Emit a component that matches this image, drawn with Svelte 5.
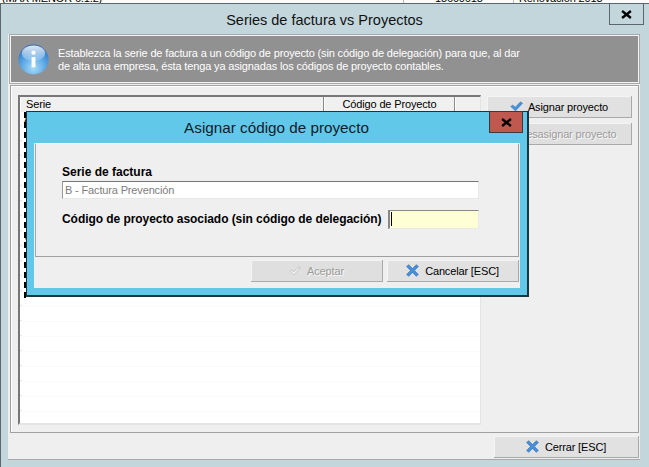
<script>
  const rows = Array.from({ length: 22 }, (_, i) => i);
  const marks = { 0: 'A', 8: 'V' };
</script>

{#snippet check()}
  <svg class="ic" viewBox="0 0 20 16" width="13" height="11" aria-hidden="true">
    <path d="M1 8 L4.5 5.5 L8 9 L16 0.8 L19.5 3 L8.5 15 Z" fill="#4a90d9" stroke="#2f6fb5" stroke-width="0.6"/>
  </svg>
{/snippet}

{#snippet hollowCheck()}
  <svg class="ic" viewBox="0 0 20 16" width="12" height="10" aria-hidden="true">
    <path d="M2 8 L5 6 L8 9.5 L16 1 L18.5 2.5 L8.5 14.5 Z" fill="#f2f2f2" stroke="#b4b4b4" stroke-width="1.1"/>
  </svg>
{/snippet}

{#snippet cross()}
  <svg class="ic" viewBox="0 0 20 20" width="13" height="13" aria-hidden="true">
    <path d="M4 1 L10 7 L16 1 L19 4 L13 10 L19 16 L16 19 L10 13 L4 19 L1 16 L7 10 L1 4 Z" fill="#4a90d9" stroke="#2f6fb5" stroke-width="1" stroke-linejoin="round"/>
  </svg>
{/snippet}

<div class="desktop">
  <div class="behind">
    <span class="b1">(MAX MENOR 6.1.2)</span>
    <i class="sep s1"></i>
    <span class="b2">18600618</span>
    <i class="sep s2"></i>
    <span class="b3">Renovación 2013</span>
  </div>

  <div class="window">
    <div class="titlebar">Series de factura vs Proyectos</div>
    <button class="close">
      <svg viewBox="0 0 10 8" width="11" height="9" aria-hidden="true"><path d="M1 0.8 L9 7.2 M9 0.8 L1 7.2" stroke="#000" stroke-width="2.1"/></svg>
    </button>

    <div class="content">
      <div class="info">
        <svg class="orb" viewBox="0 0 32 32" width="31" height="31" aria-hidden="true">
          <defs>
            <radialGradient id="o" cx="50%" cy="78%" r="75%">
              <stop offset="0" stop-color="#a9dcf8"/>
              <stop offset="0.55" stop-color="#5aa6e4"/>
              <stop offset="1" stop-color="#2a6fbe"/>
            </radialGradient>
            <linearGradient id="g" x1="0" y1="0" x2="0" y2="1">
              <stop offset="0" stop-color="#fff" stop-opacity="0.85"/>
              <stop offset="1" stop-color="#fff" stop-opacity="0.15"/>
            </linearGradient>
          </defs>
          <circle cx="16" cy="16" r="15.5" fill="url(#o)"/>
          <ellipse cx="16" cy="9.5" rx="12" ry="8" fill="url(#g)"/>
          <circle cx="16" cy="9" r="2.2" fill="#fff"/>
          <path d="M14 13.5 H18 V24 H14 Z" fill="#fff"/>
        </svg>
        <p>Establezca la serie de factura a un código de proyecto (sin código de delegación) para que, al dar<br/>de alta una empresa, ésta tenga ya asignadas los códigos de proyecto contables.</p>
      </div>

      <div class="group">
        <div class="list">
          <div class="head">
            <span class="h1">Serie</span>
            <span class="h2">Código de Proyecto</span>
            <span class="h3"></span>
          </div>
          <div class="rows">
            {#each rows as r}
              <div class="row">{marks[r] ?? ''}</div>
            {/each}
            <div class="focus"></div>
          </div>
        </div>
        <div class="actions">
          <button class="btn">{@render check()}<span class="lbl">Asignar proyecto</span></button>
          <button class="btn off">{@render hollowCheck()}<span class="lbl">Desasignar proyecto</span></button>
        </div>
      </div>

      <div class="footer">
        <button class="btn closebtn">{@render cross()}<span class="lbl">Cerrar [ESC]</span></button>
      </div>
    </div>
  </div>

  <div class="modal">
    <div class="mtitle">Asignar código de proyecto</div>
    <button class="mclose">
      <svg viewBox="0 0 10 8" width="11" height="9" aria-hidden="true"><path d="M1 0.8 L9 7.2 M9 0.8 L1 7.2" stroke="#000" stroke-width="2.1"/></svg>
    </button>
    <div class="mbody">
      <div class="mgroup">
        <div class="flabel first">Serie de factura</div>
        <div class="field wide">B - Factura Prevención</div>
        <div class="line">
          <span class="flabel">Código de proyecto asociado (sin código de delegación)</span>
          <div class="field code"><i class="caret"></i></div>
        </div>
      </div>
      <div class="mfoot">
        <button class="btn mbtn off">{@render hollowCheck()}<span class="lbl">Aceptar</span></button>
        <button class="btn mbtn">{@render cross()}<span class="lbl">Cancelar [ESC]</span></button>
      </div>
    </div>
  </div>
</div>

<style>
  :global(body) { margin: 0; }
  .desktop {
    position: relative;
    width: 649px;
    height: 467px;
    overflow: hidden;
    background: #fff;
    font-family: "Liberation Sans", Arial, sans-serif;
    font-size: 11px;
    letter-spacing: -0.15px;
    color: #000;
  }
  .behind { position: absolute; inset: 0 0 auto 0; height: 4px; overflow: hidden; background: #fbfbfb; line-height: 12px; }
  .behind span { position: absolute; top: -8px; }
  .sep { position: absolute; top: 0; width: 1px; height: 4px; background: #bbb; }
  .s1 { left: 403px; }
  .s2 { left: 513px; }
  .b1 { left: 2px; }
  .b2 { left: 435px; }
  .b3 { left: 519px; }

  .window {
    position: absolute;
    left: 0;
    top: 3px;
    width: 649px;
    height: 464px;
    box-sizing: border-box;
    background: #c2d6dc;
    border-top: 1px solid #5c6670;
    border-left: 1px solid #5c6670;
    display: flex;
    flex-direction: column;
  }
  .titlebar {
    height: 30px;
    flex: none;
    display: flex;
    align-items: center;
    justify-content: center;
    font-size: 14.5px;
    letter-spacing: 0;
    padding-right: 1px;
    padding-top: 1px;
    box-sizing: border-box;
    color: #111;
  }
  .close {
    position: absolute;
    top: -1px;
    left: 608px;
    width: 35px;
    height: 22px;
    padding: 0;
    box-sizing: border-box;
    background: #c2d6dc;
    border: 1px solid #5c6670;
    display: flex;
    align-items: center;
    justify-content: center;
  }
  .content {
    margin-left: 7px;
    width: 632px;
    height: 426px;
    flex: none;
    box-sizing: border-box;
    background: #efefef;
    border-bottom: 1px solid #a8a8a8;
    display: flex;
    flex-direction: column;
    padding: 1px 1px 0 2px;
  }
  .info {
    height: 48px;
    flex: none;
    box-sizing: border-box;
    background: #919191;
    border: 1px solid #f4f4f4;
    outline: 1px solid #a8a8a8;
    outline-offset: 0;
    display: flex;
    align-items: center;
    padding-left: 7px;
    gap: 9px;
    color: #fff;
  }
  .orb { flex: none; }
  .info p { margin: 2px 0 0; line-height: 13px; }
  .group {
    margin-top: 2px;
    height: 348px;
    flex: none;
    box-sizing: border-box;
    border: 1px solid #a0a0a0;
    box-shadow: inset 1px 1px 0 #fff;
    padding: 9px 6px 7px 7px;
    display: flex;
    gap: 6px;
  }
  .list {
    width: 463px;
    flex: none;
    box-sizing: border-box;
    background: #fff;
    border-top: 2px solid #777;
    border-left: 2px solid #777;
    border-right: 1px solid #e4e4e4;
    border-bottom: 2px solid #e4e4e4;
    display: flex;
    flex-direction: column;
    overflow: hidden;
  }
  .head { display: flex; height: 15px; flex: none; background: #f0f0f0; line-height: 15px; }
  .head span { box-sizing: border-box; border-right: 1px solid #8a8a8a; border-left: 1px solid #fff; display: block; }
  .h1 { width: 304px; padding-left: 5px; }
  .h2 { width: 131px; text-align: center; }
  .h3 { flex: 1; border-right: none !important; }
  .rows { position: relative; flex: 1; overflow: hidden; }
  .row {
    height: 15px;
    box-sizing: border-box;
    border-bottom: 1px solid #fbfbfb;
    padding-left: 4px;
    line-height: 14px;
    background: linear-gradient(#fff 13px, #e6e6e6 13px) no-repeat 0 0 / 2px 14px;
  }
  .focus { position: absolute; left: 4px; top: 0; height: 186px; border-left: 2px dashed #000; }

  .actions { display: flex; flex-direction: column; gap: 5px; width: 145px; flex: none; padding-top: 1px; }
  .btn {
    height: 22px;
    box-sizing: border-box;
    padding: 0;
    margin: 0;
    font: inherit;
    letter-spacing: inherit;
    color: #000;
    background: #e1e1e1;
    border: none;
    border-right: 1px solid #a9a9a9;
    border-bottom: 1px solid #a9a9a9;
    box-shadow: inset 1px 1px 0 #f4f4f4;
    display: flex;
    align-items: center;
    justify-content: center;
    gap: 5px;
  }
  .off { color: #9c9c9c; text-shadow: 1px 1px 0 #f8f8f8; background: #dfdfdf; }
  .ic { flex: none; }
  .footer { flex: 1; display: flex; justify-content: flex-end; padding-top: 3px; }
  .closebtn { width: 145px; gap: 6px; }

  .modal {
    position: absolute;
    left: 26px;
    top: 111px;
    width: 503px;
    height: 186px;
    box-sizing: border-box;
    background: #62c8ea;
    border: 1px solid #1d3440;
    border-bottom-width: 2px;
    border-right-width: 2px;
    display: flex;
    flex-direction: column;
    padding: 0 7px 7px 7px;
  }
  .mtitle {
    height: 31px;
    flex: none;
    display: flex;
    align-items: center;
    justify-content: center;
    font-size: 15.25px;
    letter-spacing: 0;
    color: #10202a;
    padding-right: 1px;
    box-sizing: border-box;
  }
  .mclose {
    position: absolute;
    left: 462px;
    top: -1px;
    width: 34px;
    height: 22px;
    padding: 0;
    box-sizing: border-box;
    background: #c0584f;
    border: 1px solid #3a3a3a;
    display: flex;
    align-items: center;
    justify-content: center;
  }
  .mbody { flex: 1; background: #efefef; display: flex; flex-direction: column; padding: 0 1px 1px; }
  .mgroup {
    height: 114px;
    flex: none;
    box-sizing: border-box;
    border: 1px solid #a0a0a0;
    border-left-color: #a8a8a8;
    border-top-color: #fff;
    padding: 21px 40px 0 26px;
    display: flex;
    flex-direction: column;
  }
  .flabel {
    font-weight: 700;
    font-size: 12px;
    letter-spacing: 0;
    line-height: 15px;
    white-space: nowrap;
  }
  .field {
    height: 18px;
    box-sizing: border-box;
    background: #fff;
    border-top: 1px solid #777;
    border-left: 1px solid #999;
    border-right: 1px solid #e8e8e8;
    border-bottom: 1px solid #e8e8e8;
    color: #7d7d7d;
    line-height: 16px;
    padding-left: 2px;
  }
  .wide { width: 417px; margin-top: 1px; }
  .line { display: flex; align-items: center; margin-top: 10px; width: 417px; justify-content: space-between; height: 20px; }
  .line .flabel { letter-spacing: -0.06px; }
  .code { width: 91px; height: 19px; background: #ffffd5; position: relative; flex: none; border-top-color: #888; border-left-width: 2px; border-left-color: #888; }
  .caret { display: block; position: absolute; left: 1px; top: 1px; width: 1px; height: 14px; background: #000; }
  .mfoot { display: flex; justify-content: flex-end; gap: 4px; padding-top: 3px; padding-right: 0; }
  .mbtn { width: 132px; gap: 6px; }
</style>
